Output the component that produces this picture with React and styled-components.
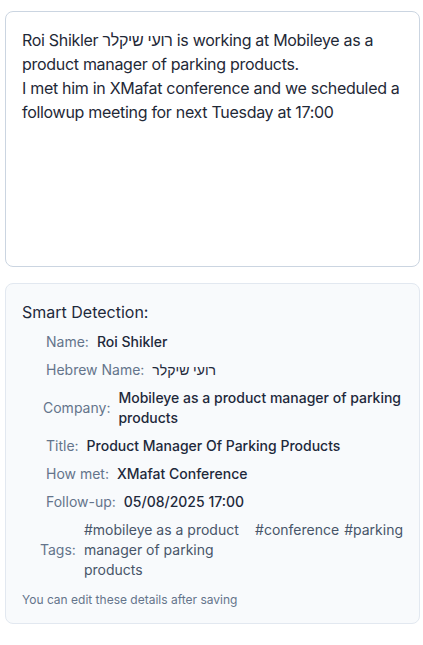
import React from 'react'
import styled, { createGlobalStyle } from 'styled-components'

const GlobalStyle = createGlobalStyle`
  body {
    margin: 0;
    background: #ffffff;
    font-family: Inter, "Liberation Sans", sans-serif;
  }
`

const Page = styled.div`
  display: flex;
  flex-direction: column;
  gap: 16px;
  padding: 11px 3px 20px 5px;
`

const NoteInput = styled.textarea`
  display: block;
  box-sizing: border-box;
  width: 100%;
  height: 256px;
  margin: 0;
  padding: 16px;
  border: 1px solid #cbd5e1;
  border-radius: 8px;
  background: #ffffff;
  font-family: inherit;
  font-size: 16px;
  line-height: 24px;
  letter-spacing: -0.3px;
  color: #1f2937;
  resize: none;
  outline: none;
`

const Panel = styled.section`
  box-sizing: border-box;
  display: flex;
  flex-direction: column;
  padding: 16px 16px 15px 16px;
  border: 1px solid #e2e8f0;
  border-radius: 8px;
  background: #f8fafc;
`

const PanelTitle = styled.h3`
  margin: 0 0 8px;
  font-size: 16px;
  font-weight: 400;
  line-height: 24px;
  color: #1e293b;
`

const Fields = styled.div`
  display: flex;
  flex-direction: column;
  gap: 8px;
`

const Row = styled.div`
  display: flex;
  align-items: center;
  gap: 8px;
  padding-left: ${p => p.inset}px;
  font-size: 14px;
  line-height: 20px;
`

const Label = styled.span`
  flex-shrink: 0;
  color: #64748b;
`

const Value = styled.span`
  font-weight: 500;
  color: #1e293b;
`

const TagList = styled.div`
  display: flex;
  gap: 5px;
  color: #475569;
`

const Tag = styled.span``

const Hint = styled.p`
  margin: 12px 0 0;
  font-size: 12px;
  line-height: 16px;
  color: #64748b;
`

const note = 'Roi Shikler רועי שיקלר is working at Mobileye as a product manager of parking products.\nI met him in XMafat conference and we scheduled a followup meeting for next Tuesday at 17:00'

const fields = [
  { label: 'Name:', value: 'Roi Shikler', inset: 24 },
  { label: 'Hebrew Name:', value: 'רועי שיקלר', inset: 24 },
  { label: 'Company:', value: 'Mobileye as a product manager of parking products', inset: 21 },
  { label: 'Title:', value: 'Product Manager Of Parking Products', inset: 24 },
  { label: 'How met:', value: 'XMafat Conference', inset: 24 },
  { label: 'Follow-up:', value: '05/08/2025 17:00', inset: 24 },
]

const tags = ['#mobileye as a product manager of parking products', '#conference', '#parking']

const App = () => (
  <>
    <GlobalStyle />
    <Page>
      <NoteInput defaultValue={note} spellCheck={false} />
      <Panel>
        <PanelTitle>Smart Detection:</PanelTitle>
        <Fields>
          {fields.map(f => (
            <Row key={f.label} inset={f.inset}>
              <Label>{f.label}</Label>
              <Value>{f.value}</Value>
            </Row>
          ))}
          <Row inset={18}>
            <Label>Tags:</Label>
            <TagList>
              {tags.map(t => <Tag key={t}>{t}</Tag>)}
            </TagList>
          </Row>
        </Fields>
        <Hint>You can edit these details after saving</Hint>
      </Panel>
    </Page>
  </>
)

export default App
